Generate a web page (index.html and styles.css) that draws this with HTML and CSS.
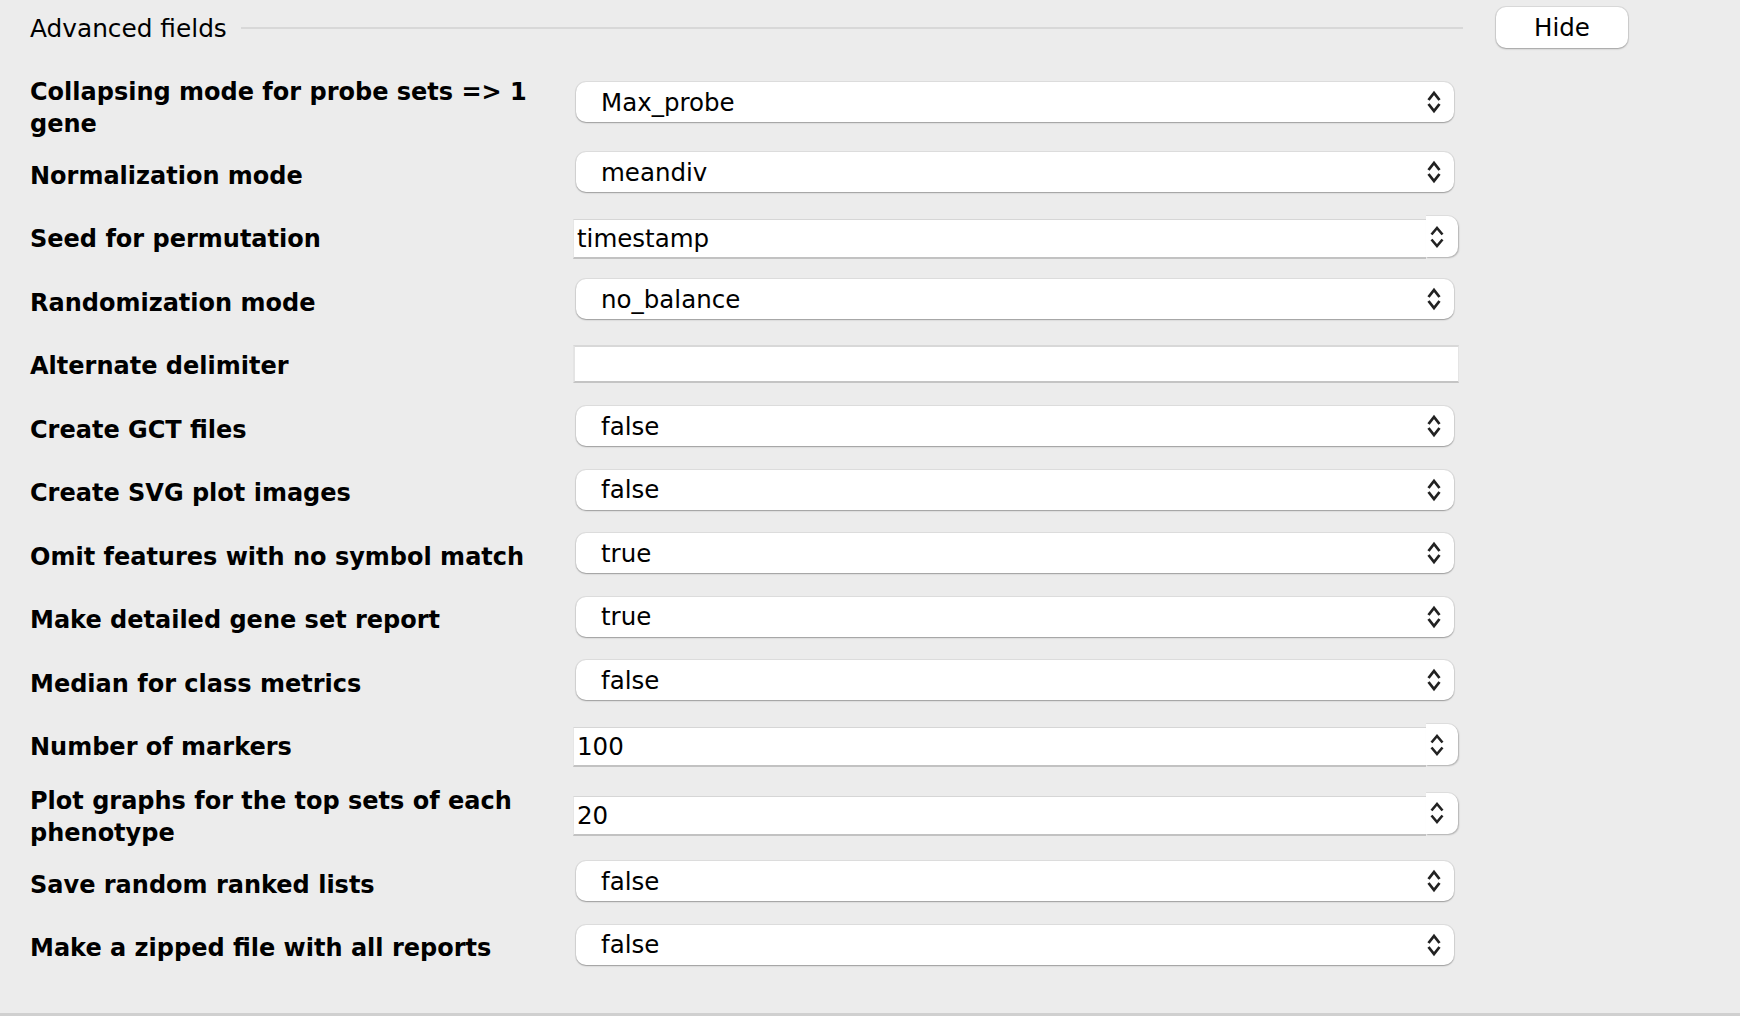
FILE: index.html
```html
<!DOCTYPE html>
<html>
<head>
<meta charset="utf-8">
	<title>Advanced fields</title>
	<link rel="stylesheet" href="styles.css">
</head>
<body>
	<div id="panel">
		<div class="header">
			<span class="legend">Advanced fields</span>
			<span class="rule"></span>
			<button class="hide">Hide</button>
		</div>
		<div class="rows">
			<div class="row tall">
				<div class="label">Collapsing mode for probe sets =&gt; 1 gene</div>
				<div class="select"><span>Max_probe</span><svg width="16" height="24" viewBox="0 0 16 24"><path d="M2.5 10 L8 3 L13.5 10 M2.5 14 L8 21 L13.5 14"/></svg></div>
			</div>
			<div class="row">
				<div class="label">Normalization mode</div>
				<div class="select"><span>meandiv</span><svg width="16" height="24" viewBox="0 0 16 24"><path d="M2.5 10 L8 3 L13.5 10 M2.5 14 L8 21 L13.5 14"/></svg></div>
			</div>
			<div class="row">
				<div class="label">Seed for permutation</div>
				<div class="spin">
					<input class="field" type="text" value="timestamp">
					<div class="arrows"><svg width="16" height="24" viewBox="0 0 16 24"><path d="M2.5 9.5 L8 3 L13.5 9.5 M2.5 14.5 L8 21 L13.5 14.5"/></svg></div>
				</div>
			</div>
			<div class="row">
				<div class="label">Randomization mode</div>
				<div class="select"><span>no_balance</span><svg width="16" height="24" viewBox="0 0 16 24"><path d="M2.5 10 L8 3 L13.5 10 M2.5 14 L8 21 L13.5 14"/></svg></div>
			</div>
			<div class="row">
				<div class="label">Alternate delimiter</div>
				<input class="text" type="text" value="">
			</div>
			<div class="row">
				<div class="label">Create GCT files</div>
				<div class="select"><span>false</span><svg width="16" height="24" viewBox="0 0 16 24"><path d="M2.5 10 L8 3 L13.5 10 M2.5 14 L8 21 L13.5 14"/></svg></div>
			</div>
			<div class="row">
				<div class="label">Create SVG plot images</div>
				<div class="select"><span>false</span><svg width="16" height="24" viewBox="0 0 16 24"><path d="M2.5 10 L8 3 L13.5 10 M2.5 14 L8 21 L13.5 14"/></svg></div>
			</div>
			<div class="row">
				<div class="label">Omit features with no symbol match</div>
				<div class="select"><span>true</span><svg width="16" height="24" viewBox="0 0 16 24"><path d="M2.5 10 L8 3 L13.5 10 M2.5 14 L8 21 L13.5 14"/></svg></div>
			</div>
			<div class="row">
				<div class="label">Make detailed gene set report</div>
				<div class="select"><span>true</span><svg width="16" height="24" viewBox="0 0 16 24"><path d="M2.5 10 L8 3 L13.5 10 M2.5 14 L8 21 L13.5 14"/></svg></div>
			</div>
			<div class="row">
				<div class="label">Median for class metrics</div>
				<div class="select"><span>false</span><svg width="16" height="24" viewBox="0 0 16 24"><path d="M2.5 10 L8 3 L13.5 10 M2.5 14 L8 21 L13.5 14"/></svg></div>
			</div>
			<div class="row">
				<div class="label">Number of markers</div>
				<div class="spin">
					<input class="field" type="text" value="100">
					<div class="arrows"><svg width="16" height="24" viewBox="0 0 16 24"><path d="M2.5 9.5 L8 3 L13.5 9.5 M2.5 14.5 L8 21 L13.5 14.5"/></svg></div>
				</div>
			</div>
			<div class="row tall2">
				<div class="label">Plot graphs for the top sets of each phenotype</div>
				<div class="spin">
					<input class="field" type="text" value="20">
					<div class="arrows"><svg width="16" height="24" viewBox="0 0 16 24"><path d="M2.5 9.5 L8 3 L13.5 9.5 M2.5 14.5 L8 21 L13.5 14.5"/></svg></div>
				</div>
			</div>
			<div class="row">
				<div class="label">Save random ranked lists</div>
				<div class="select"><span>false</span><svg width="16" height="24" viewBox="0 0 16 24"><path d="M2.5 10 L8 3 L13.5 10 M2.5 14 L8 21 L13.5 14"/></svg></div>
			</div>
			<div class="row">
				<div class="label">Make a zipped file with all reports</div>
				<div class="select"><span>false</span><svg width="16" height="24" viewBox="0 0 16 24"><path d="M2.5 10 L8 3 L13.5 10 M2.5 14 L8 21 L13.5 14"/></svg></div>
			</div>
		</div>
	</div>
</body>
</html>
```

FILE: styles.css
```css
html,body{margin: 0;padding: 0;}
body{background-color: #ececec;font-family: "DejaVu Sans", sans-serif;color: #000;}

#panel{height: 1013px;border-bottom: 3px solid #d0d0d0;overflow: hidden;}

.header{display: flex;align-items: center;width: 1628px;height: 41px;margin-top: 7px;padding-left: 30px;box-sizing: border-box;}
.legend{font-size: 24.8px;white-space: nowrap;padding-top: 2px;}
.rule{flex: 1;height: 2px;background-color: #d8d8d8;margin: 0 33px 0 14px;}
.hide{width: 132px;height: 41px;border: none;border-radius: 10px;background-color: #fff;font-family: "DejaVu Sans", sans-serif;font-size: 24.5px;color: #000;box-shadow: 0 0 0 1px rgba(0,0,0,0.07), 0 1px 2px rgba(0,0,0,0.28);padding: 0;}

.rows{margin-top: 16px;}
.row{display: flex;align-items: center;min-height: 63.5px;padding-left: 30px;}
.row.tall{min-height: 76.5px;}
.row.tall2{min-height: 73.75px;}
.label{width: 543px;flex: none;font-size: 24px;font-weight: bold;line-height: 32px;padding-top: 7px;}
.tall .label{padding-top: 12px;}
.tall2 .label{padding-top: 9px;}

.select{display: flex;align-items: center;justify-content: space-between;width: 878px;height: 40px;margin-left: 3px;padding: 0 12px 0 25px;box-sizing: border-box;background-color: #fff;border-radius: 10px;box-shadow: 0 0 0 1px rgba(0,0,0,0.06), 0 1px 1.5px rgba(0,0,0,0.3);font-size: 24.5px;}
.select svg, .arrows svg{display: block;}
.select path, .arrows path{fill: none;stroke: #222;stroke-width: 2.8;}

.spin{display: flex;align-items: flex-start;margin-top: 4px;}
.field{width: 853px;height: 40px;margin-top: 3px;box-sizing: border-box;border: none;border-top: 1px solid #d6d6d6;border-left: 1px solid #e6e6e6;border-bottom: 2px solid #c2c2c2;padding: 0 0 0 3px;background-color: #fff;font-family: "DejaVu Sans", sans-serif;font-size: 24.5px;color: #000;outline: none;}
.arrows{display: flex;align-items: center;width: 32px;height: 41px;padding-left: 3px;box-sizing: border-box;background-color: #fff;border-radius: 0 10px 10px 0;box-shadow: 1px 1px 1.5px rgba(0,0,0,0.25), 0 -1px 0 rgba(0,0,0,0.06);}
.arrows path{stroke-width: 2.6;}

.text{width: 886px;height: 38px;margin-top: 2px;box-sizing: border-box;border: none;border-top: 2px solid #d8d8d8;border-left: 2px solid #e4e4e4;border-right: 1px solid #e4e4e4;border-bottom: 2px solid #c4c4c4;background-color: #fff;outline: none;font-family: "DejaVu Sans", sans-serif;font-size: 24.5px;}
```
